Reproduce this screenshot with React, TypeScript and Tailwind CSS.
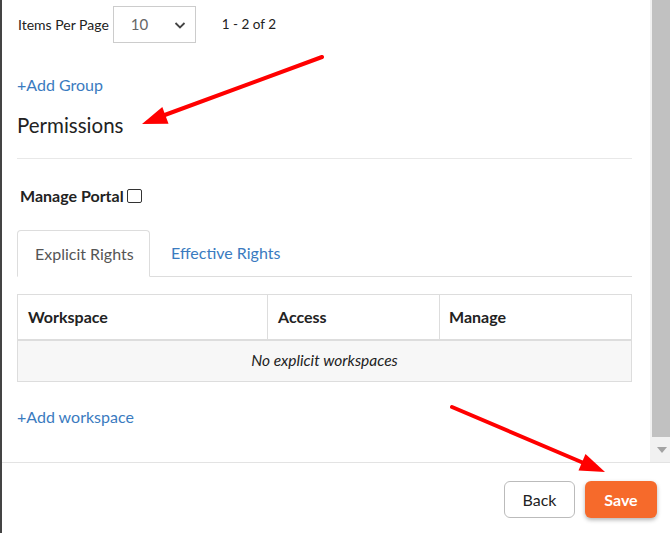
import React from 'react';

const font = { fontFamily: 'Lato, "Open Sans", sans-serif' };

const Arrows: React.FC = () => (
  <svg className="pointer-events-none absolute left-0 top-0" width={670} height={533}>
    <line x1={320} y1={57} x2={160} y2={116} stroke="#f00" strokeWidth={4} strokeLinecap="round" />
    <polygon points="140,124 166.5,123.7 160.3,106.9" fill="#f00" />
    <line x1={450} y1={407} x2={584} y2={464} stroke="#f00" strokeWidth={4} strokeLinecap="round" />
    <polygon points="603,472 576.5,470.5 583.5,453.9" fill="#f00" />
  </svg>
);

export default function App() {
  return (
    <div className="relative flex h-[533px] w-[670px] flex-col overflow-hidden border-l-2 border-[#444] bg-white text-[#222]" style={font}>
      <div className="flex h-[462px] min-h-0">
        <div className="flex-1 pl-[15px] pr-[18px] pt-[6px]">
          <div className="flex h-[37px] items-center text-[14px]">
            <span className="ml-[1px]">Items Per Page</span>
            <div className="ml-[4px] flex h-[37px] w-[83px] items-center justify-between border border-[#ccc] pl-[17px] pr-[8px] text-[15px] text-[#666]">
              <span>10</span>
              <svg width="14" height="14" viewBox="0 0 14 14">
                <path d="M2.5 5 L7 9.5 L11.5 5" fill="none" stroke="#444" strokeWidth="1.8" />
              </svg>
            </div>
            <span className="ml-[26px] text-[13.5px]">1 - 2 of 2</span>
          </div>

          <div className="mt-[32px] h-[20px] text-[16px] leading-[20px] text-[#3a7bc0]">+Add Group</div>
          <div className="mt-[17px] h-[26px] text-[20.5px] leading-[26px] text-[#222]">Permissions</div>
          <div className="mt-[20px] border-t border-[#e8e8e8]" />

          <div className="ml-[3px] mt-[27px] flex h-[20px] items-center text-[16px] font-bold leading-[20px]">
            <span>Manage Portal</span>
            <span className="ml-[3px] mb-[1px] inline-block h-[14px] w-[15px] rounded-[2px] border border-[#333] bg-white" />
          </div>

          <div className="mt-[24px] flex h-[47px] border-b border-[#ddd]">
            <div className="-mb-px flex h-[47px] w-[133px] items-center rounded-t-[4px] border border-b-white border-[#ddd] bg-white pl-[17px] text-[16px] text-[#555]">
              Explicit Rights
            </div>
            <div className="flex items-center pl-[21px] text-[16px] text-[#3a7bc0]">Effective Rights</div>
          </div>

          <div className="mt-[17px] border border-[#ddd] text-[16px]">
            <div className="flex h-[46px] border-b-2 border-[#ddd] font-bold">
              <div className="flex w-[250px] items-center border-r border-[#ddd] pl-[10px]">Workspace</div>
              <div className="flex w-[172px] items-center border-r border-[#ddd] pl-[10px]">Access</div>
              <div className="flex flex-1 items-center pl-[9px]">Manage</div>
            </div>
            <div className="flex h-[40px] items-center justify-center bg-[#f7f7f7] text-[15.5px] italic">No explicit workspaces</div>
          </div>

          <div className="mt-[25px] h-[20px] text-[16px] leading-[20px] text-[#3a7bc0]">+Add workspace</div>
        </div>

        <div className="flex w-[20px] flex-col bg-[#f1f1f1] pl-[2px]">
          <div className="h-[437px] bg-[#c1c1c1]" />
          <div className="flex flex-1 items-center justify-center">
            <svg width="10" height="6" viewBox="0 0 10 6" className="ml-[1px]">
              <path d="M0 0 L10 0 L5 6 Z" fill="#a3a3a3" />
            </svg>
          </div>
        </div>
      </div>

      <div className="flex flex-1 items-start justify-end gap-[10px] border-t border-[#e3e3e3] pr-[13px] pt-[18px]">
        <button className="h-[37px] w-[71px] rounded-[6px] border border-[#bbb] bg-white text-[16px] text-[#222]">Back</button>
        <button className="h-[37px] w-[72px] rounded-[6px] bg-[#f66a2b] text-[16px] font-bold text-white shadow-[0_2px_4px_rgba(0,0,0,0.3)]">Save</button>
      </div>

      <Arrows />
    </div>
  );
}
